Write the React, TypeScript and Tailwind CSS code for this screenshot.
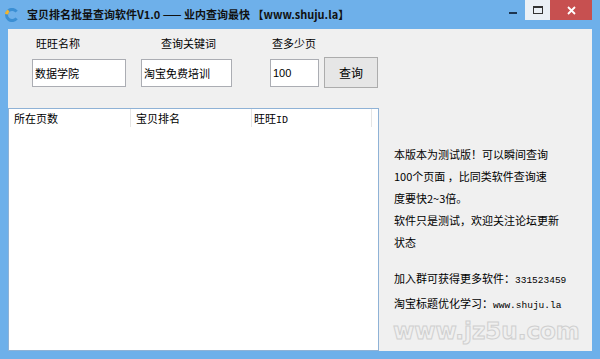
const cjk = "font-['Noto_Sans_CJK_SC','Noto_Sans',sans-serif]";

function TitleIcon() {
  return (
    <svg width="14" height="14" viewBox="0 0 14 14">
      <path d="M11.6 3.6 A5.6 5.6 0 1 0 11.6 10.4" fill="none" stroke="#3b8fd4" strokeWidth="3" />
      <path d="M3.6 2.6 A5.6 5.6 0 0 0 1.5 6.2" fill="none" stroke="#f2b42e" strokeWidth="3" />
    </svg>
  );
}

function WindowButtons() {
  return (
    <div className="ml-auto flex h-[20px]">
      <div className="flex w-[24px] items-center justify-center">
        <div className="mt-[5px] h-[2px] w-[8px] bg-[#1d3550]" />
      </div>
      <div className="flex w-[25px] items-center justify-center bg-[#eaf0f6]">
        <div className="h-[8px] w-[10px] border border-t-[2px] border-[#333]" />
      </div>
      <div className="flex w-[42px] items-center justify-center bg-[#c75050]">
        <svg width="9" height="9" viewBox="0 0 9 9">
          <path d="M1 1 L8 8 M8 1 L1 8" stroke="#fff" strokeWidth="1.8" />
        </svg>
      </div>
    </div>
  );
}

const field =
  "h-[28px] border border-[#abadb3] bg-white px-[2px] text-[11px] text-black outline-none";

export default function App() {
  return (
    <div className={`flex h-[359px] w-[600px] flex-col bg-[#6eb0ea] ${cjk}`}>
      {/* title bar */}
      <div className="flex h-[29px] items-start pr-[8px]">
        <div className="ml-[5px] mt-[8px]">
          <TitleIcon />
        </div>
        <div className="ml-[8px] mt-[6px] text-[11px] font-bold leading-[16px] text-[#111]">
          宝贝排名批量查询软件V1.0 —— 业内查询最快 【www.shuju.la】
        </div>
        <WindowButtons />
      </div>

      {/* client area */}
      <div className="mx-[8px] mb-[8px] flex flex-1 flex-col bg-[#f0f0f0]">
        <div className="h-[79px]">
          <div className="flex pt-[7px] text-[11px] leading-[14px] text-black">
            <span className="ml-[28px] w-[125px]">旺旺名称</span>
            <span className="w-[111px]">查询关键词</span>
            <span>查多少页</span>
          </div>
          <div className="mt-[9px] flex items-start">
            <input readOnly value="数据学院" className={`${field} ml-[24px] w-[94px]`} />
            <input readOnly value="淘宝免费培训" className={`${field} ml-[15px] w-[91px]`} />
            <input
              readOnly
              value="100"
              className={`${field} ml-[38px] w-[49px] font-['Liberation_Sans',sans-serif]`}
            />
            <button className="-mt-[2px] ml-[5px] h-[31px] w-[54px] border border-[#acacac] bg-[#e6e6e6] text-[12px] text-black">
              查询
            </button>
          </div>
        </div>

        <div className="flex flex-1">
          {/* list view */}
          <div className="w-[371px] border border-[#8fb2d6] bg-white">
            <div className="flex h-[18px] text-[11px] leading-[18px] text-black">
              <div className="w-[122px] border-r border-[#e5e5e5] pl-[5px]">所在页数</div>
              <div className="w-[121px] border-r border-[#e5e5e5] pl-[5px]">宝贝排名</div>
              <div className="w-[120px] border-r border-[#e5e5e5] pl-[2px]">
                旺旺<span className="font-['Liberation_Mono',monospace] text-[10px]">ID</span>
              </div>
            </div>
          </div>

          {/* info panel */}
          <div className="relative flex-1 pl-[15px] pt-[35px] text-[11px] leading-[22px] text-black">
            <div>本版本为测试版！可以瞬间查询</div>
            <div>100个页面 ，比同类软件查询速</div>
            <div>度要快2~3倍。</div>
            <div>软件只是测试，欢迎关注论坛更新</div>
            <div>状态</div>
            <div className="mt-[14px]">
              加入群可获得更多软件：
              <span className="font-['Liberation_Mono',monospace] text-[9.5px]">331523459</span>
            </div>
            <div>
              淘宝标题优化学习：
              <span className="font-['Liberation_Mono',monospace] text-[9.5px]">www.shuju.la</span>
            </div>
            <span className="absolute left-[14px] top-[212px] font-['DejaVu_Sans',sans-serif] text-[23px] font-bold leading-[23px] text-transparent [-webkit-text-stroke:1px_#cfcfcf]">
              www.jz5u.com
            </span>
          </div>
        </div>
      </div>
    </div>
  );
}
